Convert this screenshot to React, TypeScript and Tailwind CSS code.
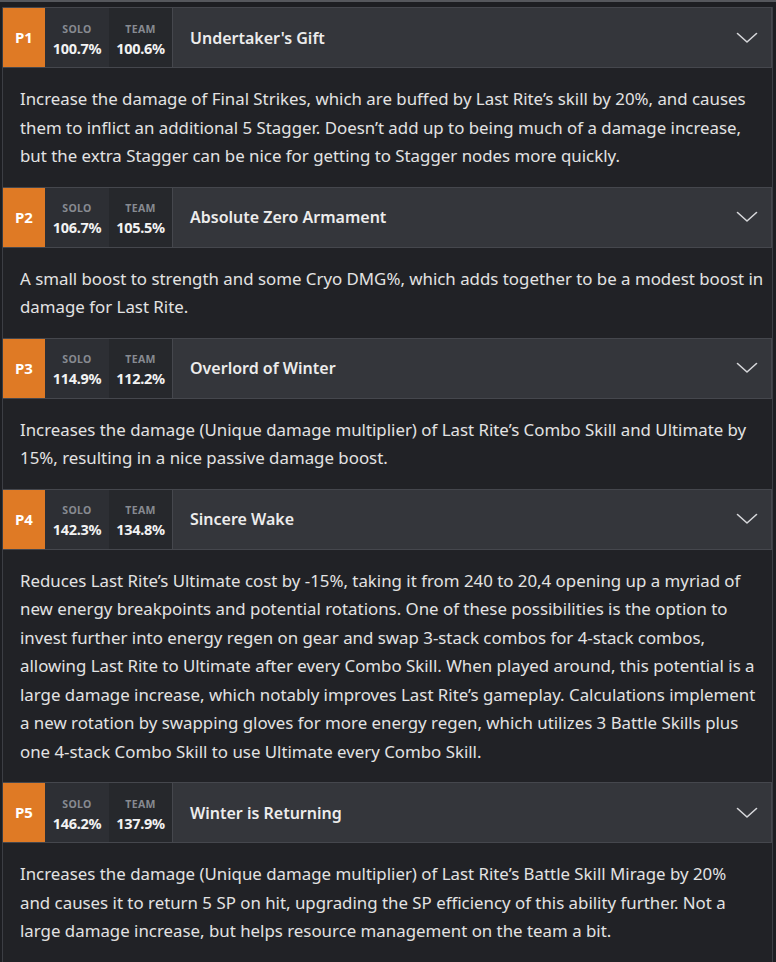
import React from "react";

type Item = {
  p: string;
  solo: string;
  team: string;
  title: string;
  lines: string[];
};

const items: Item[] = [
  {
    p: "P1",
    solo: "100.7%",
    team: "100.6%",
    title: "Undertaker's Gift",
    lines: [
      "Increase the damage of Final Strikes, which are buffed by Last Rite\u2019s skill by 20%, and causes",
      "them to inflict an additional 5 Stagger. Doesn\u2019t add up to being much of a damage increase,",
      "but the extra Stagger can be nice for getting to Stagger nodes more quickly.",
    ],
  },
  {
    p: "P2",
    solo: "106.7%",
    team: "105.5%",
    title: "Absolute Zero Armament",
    lines: [
      "A small boost to strength and some Cryo DMG%, which adds together to be a modest boost in",
      "damage for Last Rite.",
    ],
  },
  {
    p: "P3",
    solo: "114.9%",
    team: "112.2%",
    title: "Overlord of Winter",
    lines: [
      "Increases the damage (Unique damage multiplier) of Last Rite\u2019s Combo Skill and Ultimate by",
      "15%, resulting in a nice passive damage boost.",
    ],
  },
  {
    p: "P4",
    solo: "142.3%",
    team: "134.8%",
    title: "Sincere Wake",
    lines: [
      "Reduces Last Rite\u2019s Ultimate cost by -15%, taking it from 240 to 20,4 opening up a myriad of",
      "new energy breakpoints and potential rotations. One of these possibilities is the option to",
      "invest further into energy regen on gear and swap 3-stack combos for 4-stack combos,",
      "allowing Last Rite to Ultimate after every Combo Skill. When played around, this potential is a",
      "large damage increase, which notably improves Last Rite\u2019s gameplay. Calculations implement",
      "a new rotation by swapping gloves for more energy regen, which utilizes 3 Battle Skills plus",
      "one 4-stack Combo Skill to use Ultimate every Combo Skill.",
    ],
  },
  {
    p: "P5",
    solo: "146.2%",
    team: "137.9%",
    title: "Winter is Returning",
    lines: [
      "Increases the damage (Unique damage multiplier) of Last Rite\u2019s Battle Skill Mirage by 20%",
      "and causes it to return 5 SP on hit, upgrading the SP efficiency of this ability further. Not a",
      "large damage increase, but helps resource management on the team a bit.",
    ],
  },
];

function Chevron() {
  return (
    <svg width="22" height="12" viewBox="0 0 22 12" fill="none">
      <path d="M1.5 1.5 L11 10 L20.5 1.5" stroke="#d6d7da" strokeWidth="1.6" strokeLinecap="round" strokeLinejoin="round" />
    </svg>
  );
}

function Stat({ label, value, bg }: { label: string; value: string; bg: string }) {
  return (
    <div className={`flex flex-col items-center justify-center pt-[3px] ${bg}`}>
      <span className="text-[10.5px] font-bold leading-[12px] text-[#878a91] tracking-[0.3px]">{label}</span>
      <span className="mt-[5px] text-[14.5px] font-bold leading-[16px] tracking-[-0.3px] text-[#f2f2f2]">{value}</span>
    </div>
  );
}

function Row({ item }: { item: Item }) {
  return (
    <div>
      <div className="flex h-[61px] border-y border-[#45474d] bg-[#2b2d32]">
        <div className="flex w-[42px] items-center justify-center bg-[#df7a25] text-[15px] font-bold text-white">
          {item.p}
        </div>
        <div className="grid grid-cols-[64px_63px]">
          <Stat label="SOLO" value={item.solo} bg="bg-[#2d2f34]" />
          <Stat label="TEAM" value={item.team} bg="bg-[#26282c]" />
        </div>
        <div className="flex flex-1 items-center justify-between border-x border-[#45474d] bg-[#34363b] pl-[17px] pr-[13px]">
          <span className="text-[16px] font-semibold text-[#ececec]">{item.title}</span>
          <Chevron />
        </div>
      </div>
      <div className="bg-[#212226] pl-[17px] pt-[17px] pb-[16px] text-[16.85px] leading-[28.5px] text-[#e3e3e3]">
        {item.lines.map((l, i) => (
          <div key={i} className="whitespace-nowrap">
            {l}
          </div>
        ))}
      </div>
    </div>
  );
}

export default function App() {
  return (
    <div
      className="h-[962px] w-[776px] overflow-hidden bg-[#1d1e22]"
      style={{ fontFamily: '"Noto Sans", "Open Sans", sans-serif' }}
    >
      <div className="flex h-[7px] gap-[4px] border-t-2 border-[#55575c] bg-[#1d1e22]" />
      <div className="mx-[2px] mr-[3px] border-x border-[#3c3e44]">
        {items.map((it) => (
          <Row key={it.p} item={it} />
        ))}
      </div>
    </div>
  );
}
